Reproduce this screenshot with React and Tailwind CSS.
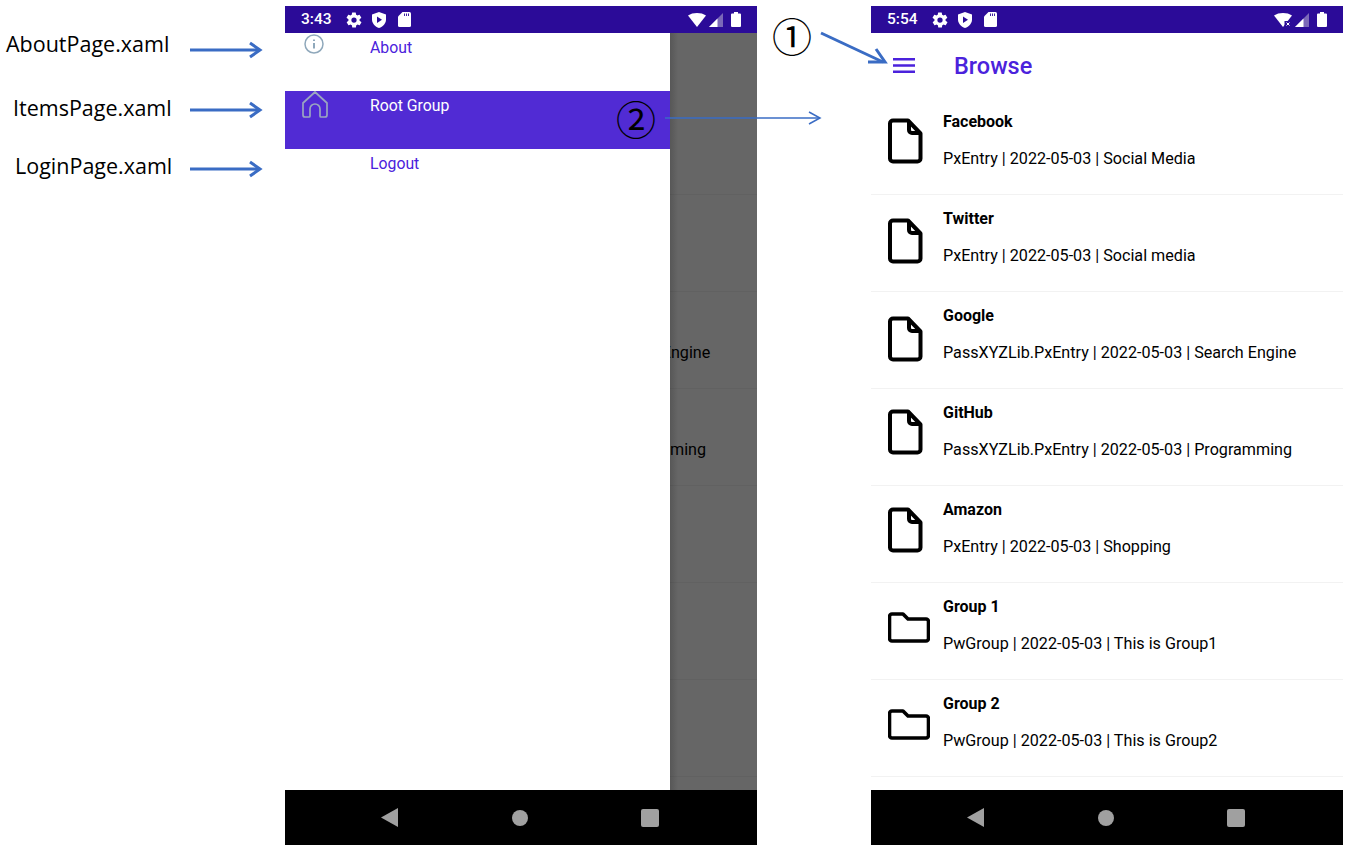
import React from "react";

const rows = [
  { title: "Facebook", sub: "PxEntry | 2022-05-03 | Social Media", icon: "doc", top: "mt-[20px]" },
  { title: "Twitter", sub: "PxEntry | 2022-05-03 | Social media", icon: "doc", top: "mt-[23px]" },
  { title: "Google", sub: "PassXYZLib.PxEntry | 2022-05-03 | Search Engine", icon: "doc", top: "mt-[24px]" },
  { title: "GitHub", sub: "PassXYZLib.PxEntry | 2022-05-03 | Programming", icon: "doc", top: "mt-[20px]" },
  { title: "Amazon", sub: "PxEntry | 2022-05-03 | Shopping", icon: "doc", top: "mt-[21px]" },
  { title: "Group 1", sub: "PwGroup | 2022-05-03 | This is Group1", icon: "folder", top: "mt-[29px]" },
  { title: "Group 2", sub: "PwGroup | 2022-05-03 | This is Group2", icon: "folder", top: "mt-[29px]" },
];

function DocIcon() {
  return (
    <svg width="35" height="46" viewBox="0 0 35 46" className="ml-[17px]" fill="none" stroke="#000" strokeWidth="4" strokeLinejoin="round">
      <path d="M5 2.500h15l12.500 13v25a3 3 0 0 1-3 3H5a3 3 0 0 1-3-3v-35a3 3 0 0 1 3-3z" />
      <path d="M21 3v9a3 3 0 0 0 3 3h8" />
    </svg>
  );
}

function FolderIcon() {
  return (
    <svg width="42" height="31" viewBox="0 0 42 31" className="ml-[17px]" fill="none" stroke="#000" strokeWidth="3.600" strokeLinejoin="round">
      <path d="M4 2h11l5 5h18a2.500 2.500 0 0 1 2.500 2.500v17a2.500 2.500 0 0 1-2.500 2.500H4a2.500 2.500 0 0 1-2.500-2.500v-22A2.500 2.500 0 0 1 4 2z" />
    </svg>
  );
}

function StatusBar({ time, noData }) {
  return (
    <div className="h-[27px] shrink-0 bg-[#2b0b98] flex items-center pl-[16px] pr-[16px] text-white">
      <span className="text-[15.500px] font-medium w-[44px]">{time}</span>
      <svg width="18" height="18" viewBox="0 0 24 24" fill="#fff">
        <path d="M19.400 13a7.500 7.500 0 0 0 0-2l2.100-1.600a.5.5 0 0 0 .1-.7l-2-3.400a.5.5 0 0 0-.6-.2l-2.500 1a7.300 7.300 0 0 0-1.700-1l-.4-2.700a.5.500 0 0 0-.5-.4h-4a.5.500 0 0 0-.5.400l-.4 2.700a7.300 7.300 0 0 0-1.700 1l-2.500-1a.5.500 0 0 0-.6.200l-2 3.400a.5.500 0 0 0 .1.700L4.600 11a7.500 7.500 0 0 0 0 2l-2.100 1.600a.5.500 0 0 0-.1.700l2 3.400c.1.200.4.300.6.200l2.500-1c.5.400 1.100.700 1.700 1l.4 2.700c0 .2.200.4.500.4h4c.3 0 .5-.2.500-.4l.4-2.700c.6-.3 1.200-.6 1.700-1l2.500 1c.2.100.5 0 .6-.2l2-3.400a.5.500 0 0 0-.1-.7zM12 15.500a3.500 3.500 0 1 1 0-7 3.500 3.500 0 0 1 0 7z" />
      </svg>
      <svg width="14" height="16" viewBox="0 0 14 16" className="ml-[9px]">
        <path d="M7 0l7 2.500v5c0 4-3 7.200-7 8.500-4-1.300-7-4.500-7-8.500v-5z" fill="#fff" />
        <path d="M5 4.500l5 3.300-5 3.300z" fill="#2b0b98" />
      </svg>
      <svg width="13" height="15" viewBox="0 0 13 15" className="ml-[12px]">
        <path d="M4.500 0H11.500a1.500 1.500 0 0 1 1.500 1.500v12a1.500 1.500 0 0 1-1.500 1.500h-10A1.500 1.500 0 0 1 0 13.500V4.500z" fill="#fff" />
        <path d="M6 1.500h.9v2.500H6zM8 1.500h.9v2.500H8zM10 1.500h.9v2.500H10z" fill="#2b0b98" />
      </svg>
      <div className="ml-auto flex items-center">
        <svg width="18" height="14" viewBox="0 0 18 14">
          <path d="M0 2.500C2.500.8 5.500 0 9 0s6.500.8 9 2.500L9 14z" fill="#fff" />
          {noData && <path d="M10.500 8h7.500v6h-7.500z" fill="#2b0b98" />}
          {noData && <path d="M12.500 9.500l3 3M15.500 9.500l-3 3" stroke="#fff" strokeWidth="1" />}
        </svg>
        <svg width="14" height="14" viewBox="0 0 14 14" className="ml-[3px]">
          <path d="M14 0v14H0z" fill="#7b68b8" />
          <path d="M8.500 5.500V14H0z" fill="#fff" />
        </svg>
        <svg width="10" height="15" viewBox="0 0 10 15" className="ml-[8px]">
          <path d="M3 0h4v1.500h2a1 1 0 0 1 1 1V14a1 1 0 0 1-1 1H1a1 1 0 0 1-1-1V2.500a1 1 0 0 1 1-1h2z" fill="#fff" />
        </svg>
      </div>
    </div>
  );
}

function NavBar() {
  return (
    <div className="h-[55px] shrink-0 bg-black flex items-center">
      <svg width="18" height="19" viewBox="0 0 18 19" className="ml-[96px]">
        <path d="M17 0v19L0 9.500z" fill="#a0a0a0" />
      </svg>
      <div className="w-[16px] h-[16px] rounded-full bg-[#a0a0a0] ml-[113px]" />
      <div className="w-[18px] h-[18px] rounded-[2px] bg-[#a0a0a0] ml-[113px]" />
    </div>
  );
}

function ItemList() {
  return (
    <div>
      <div className="h-[65px] flex items-center pb-[1px]">
        <svg width="22" height="15" viewBox="0 0 22 15" className="ml-[22px] mt-[1px]" fill="#4b22dc">
          <path d="M0 0h22v2.400H0zM0 6.300h22v2.400H0zM0 12.600h22V15H0z" />
        </svg>
        <span className="ml-[39px] mt-[3px] text-[23.500px] font-medium text-[#4b22dc]">Browse</span>
      </div>
      {rows.map((row) => (
        <div key={row.title} className="h-[97px] flex border-b border-[#f2f2f2]">
          <div className={`w-[72px] shrink-0 ${row.top}`}>
            {row.icon === "doc" ? <DocIcon /> : <FolderIcon />}
          </div>
          <div className="pt-[14px] text-[16.150px] leading-[20px] text-black whitespace-nowrap">
            <div className="font-bold text-[16px]">{row.title}</div>
            <div className="mt-[17px]">{row.sub}</div>
          </div>
        </div>
      ))}
    </div>
  );
}

function DrawerItem({ label, active, icon }) {
  return (
    <div className={`h-[58px] relative pl-[85px] pt-[5px] text-[15.800px] leading-[20px] ${active ? "bg-[#512bd4] text-white" : "text-[#4b22dc]"}`}>
      {icon}
      {label}
    </div>
  );
}

function Phone({ time, noData, drawer, className }) {
  return (
    <div className={`w-[472px] h-[839px] flex flex-col shrink-0 ${className}`}>
      <StatusBar time={time} noData={noData} />
      <div className="flex-1 relative overflow-hidden bg-white">
        <ItemList />
        {drawer && (
          <>
            <div className="absolute inset-0 bg-black/60" />
            <div className="absolute left-[385px] top-0 bottom-0 w-[8px] bg-gradient-to-r from-black/15 to-transparent" />
            <div className="absolute left-0 top-0 bottom-0 w-[385px] bg-white">
              <DrawerItem
                label="About"
                icon={
                  <svg width="20" height="20" viewBox="0 0 20 20" className="absolute left-[19px] top-[1px]" fill="none" stroke="#8fa8bb" strokeWidth="1.500">
                    <circle cx="10" cy="10" r="9" />
                    <path d="M10 9v5.500M10 5.500v1.500" strokeWidth="2" />
                  </svg>
                }
              />
              <DrawerItem
                label="Root Group"
                active
                icon={
                  <svg width="26" height="27" viewBox="0 0 26 27" className="absolute left-[17px] top-0" fill="none" stroke="#9aa6c0" strokeWidth="1.700" strokeLinejoin="round">
                    <path d="M1 12L13 1l12 11v12a2 2 0 0 1-2 2h-4a1 1 0 0 1-1-1v-7a5 5 0 0 0-10 0v7a1 1 0 0 1-1 1H3a2 2 0 0 1-2-2z" />
                  </svg>
                }
              />
              <DrawerItem label="Logout" />
            </div>
          </>
        )}
      </div>
      <NavBar />
    </div>
  );
}

function ThickArrow() {
  return (
    <svg width="73" height="18" viewBox="0 0 73 18" className="shrink-0" fill="none" stroke="#3a6cc4" strokeWidth="3">
      <path d="M0 9h70" />
      <path d="M60 2l10 7-10 7" strokeWidth="3" />
    </svg>
  );
}

function Label({ text, indent, arrowTop, gap }) {
  return (
    <div className={`flex ${gap}`}>
      <div className={`w-[190px] shrink-0 text-[21.500px] leading-[24px] text-black whitespace-nowrap ${indent}`}>{text}</div>
      <div className={arrowTop}>
        <ThickArrow />
      </div>
    </div>
  );
}

function Circled({ n, className }) {
  return (
    <div className={`absolute leading-none text-black font-['Noto_Sans_CJK_JP',sans-serif] ${className}`}>
      {n}
    </div>
  );
}

export default function App() {
  return (
    <div className="relative w-[1349px] h-[851px] bg-white overflow-hidden font-['Roboto',sans-serif]">
      <div className="flex pt-[6px]">
        <div className="w-[285px] shrink-0 pt-[26px] font-['Open_Sans',sans-serif]">
          <Label text="AboutPage.xaml" indent="pl-[6px]" arrowTop="mt-[9px]" gap="mb-[37px]" />
          <Label text="ItemsPage.xaml" indent="pl-[13px]" arrowTop="mt-[5px]" gap="mb-[34px]" />
          <Label text="LoginPage.xaml" indent="pl-[15px]" arrowTop="mt-[6px]" gap="" />
        </div>
        <Phone time="3:43" drawer />
        <Phone time="5:54" noData className="ml-[114px]" />
      </div>

      <Circled n="①" className="left-[772px] top-[15px] text-[40px]" />
      <Circled n="②" className="left-[616px] top-[98px] text-[40px]" />

      <svg width="1349" height="851" className="absolute left-0 top-0 pointer-events-none" fill="none">
        <path d="M665 118H820" stroke="#3a6cc4" strokeWidth="1.500" />
        <path d="M809 112l11 6-11 6" stroke="#3a6cc4" strokeWidth="1.500" />
        <path d="M821 33l62 29" stroke="#3a6cc4" strokeWidth="3" />
        <path d="M876 49l9 13-17 0" stroke="#3a6cc4" strokeWidth="3" />
      </svg>
    </div>
  );
}
